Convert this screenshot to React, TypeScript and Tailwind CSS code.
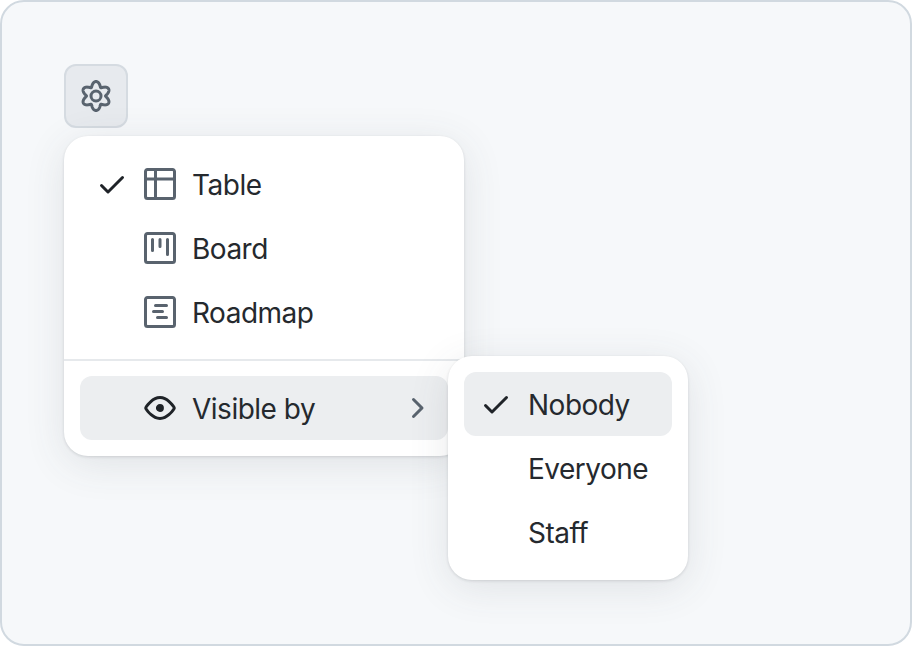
import type { ReactNode } from 'react';

// Octicons at their 16px grid, scaled up to 32
const FRAME =
  'M0 1.75C0 .784.784 0 1.75 0h12.5C15.216 0 16 .784 16 1.75v12.5A1.75 1.75 0 0 1 14.25 16H1.75A1.75 1.75 0 0 1 0 14.25ZM1.5 1.75v12.5c0 .138.112.25.25.25h12.5a.25.25 0 0 0 .25-.25V1.75a.25.25 0 0 0-.25-.25H1.75a.25.25 0 0 0-.25.25Z';

const ICONS = {
  check:
    'M13.78 4.22a.75.75 0 0 1 0 1.06l-7.25 7.25a.75.75 0 0 1-1.06 0L2.22 9.28a.751.751 0 0 1 .018-1.042.751.751 0 0 1 1.042-.018L6 10.94l6.72-6.72a.75.75 0 0 1 1.06 0Z',
  chevron:
    'M6.22 3.22a.75.75 0 0 1 1.06 0l4.25 4.25a.75.75 0 0 1 0 1.06l-4.25 4.25a.751.751 0 0 1-1.042-.018.751.751 0 0 1-.018-1.042L9.94 8 6.22 4.28a.75.75 0 0 1 0-1.06Z',
  table: FRAME + 'M5 1h1.5v14H5ZM1 4.75h14v1.5H1Z',
  board:
    FRAME +
    'M11.75 3a.75.75 0 0 1 .75.75v7.5a.75.75 0 0 1-1.5 0v-7.5a.75.75 0 0 1 .75-.75Zm-8.25.75a.75.75 0 0 1 1.5 0v5.5a.75.75 0 0 1-1.5 0ZM8 3a.75.75 0 0 1 .75.75v3.5a.75.75 0 0 1-1.5 0v-3.5A.75.75 0 0 1 8 3Z',
  roadmap:
    FRAME +
    'M4.75 7a.75.75 0 0 0 0 1.5h4.5a.75.75 0 0 0 0-1.5h-4.5ZM5 4.75A.75.75 0 0 1 5.75 4h5.5a.75.75 0 0 1 0 1.5h-5.5A.75.75 0 0 1 5 4.75ZM6.75 10a.75.75 0 0 0 0 1.5h4.5a.75.75 0 0 0 0-1.5h-4.5Z',
  eye:
    'M8 2c1.981 0 3.671.992 4.933 2.078 1.27 1.091 2.187 2.345 2.637 3.023a1.62 1.62 0 0 1 0 1.798c-.45.678-1.367 1.932-2.637 3.023C11.67 13.008 9.981 14 8 14c-1.981 0-3.671-.992-4.933-2.078C1.797 10.83.88 9.576.43 8.898a1.62 1.62 0 0 1 0-1.798c.45-.677 1.367-1.931 2.637-3.022C4.33 2.992 6.019 2 8 2ZM1.679 7.932a.12.12 0 0 0 0 .136c.411.622 1.241 1.75 2.366 2.717C5.176 11.758 6.527 12.5 8 12.5c1.473 0 2.825-.742 3.955-1.715 1.124-.967 1.954-2.096 2.366-2.717a.12.12 0 0 0 0-.136c-.412-.621-1.242-1.75-2.366-2.717C10.824 4.242 9.473 3.5 8 3.5c-1.473 0-2.825.742-3.955 1.715-1.124.967-1.954 2.096-2.366 2.717ZM8 10a2 2 0 1 1-.001-3.999A2 2 0 0 1 8 10Z',
};

function Icon({ name, className }: { name: keyof typeof ICONS; className?: string }) {
  return (
    <svg viewBox="0 0 16 16" width={32} height={32} fill="currentColor" className={className}>
      <path d={ICONS[name]} />
    </svg>
  );
}

// six rounded lobes with narrow notches between them
function gearOutline() {
  const points: string[] = [];
  for (let i = 0; i < 240; i++) {
    const angle = (i / 240) * Math.PI * 2;
    const radius = 9.5 + 5 * Math.pow(0.5 + 0.5 * Math.cos(6 * angle), 0.7);
    points.push(`${(16 + radius * Math.sin(angle)).toFixed(2)} ${(16 - radius * Math.cos(angle)).toFixed(2)}`);
  }
  return `M${points.join('L')}Z`;
}

function GearIcon() {
  return (
    <svg viewBox="0 0 32 32" width={32} height={32} fill="none" stroke="currentColor" strokeWidth={3} strokeLinejoin="round">
      <path d={gearOutline()} />
      <circle cx={16} cy={16} r={5} />
    </svg>
  );
}

interface RowProps {
  icon?: ReactNode;
  checked?: boolean;
  label: string;
}

function ViewRow({ icon, checked, label }: RowProps) {
  return (
    <div className="flex h-16 items-center rounded-xl pl-4">
      <span className="flex w-8 justify-center">
        {checked && <Icon name="check" className="text-[#1f2328]" />}
      </span>
      <span className="ml-4 text-[#59636e]">{icon}</span>
      <span className="ml-4 mt-0.5">{label}</span>
    </div>
  );
}

export default function App() {
  return (
    <div className="h-[646px] w-[912px] rounded-[24px] border-2 border-[#d1d9e0] bg-[#f6f8fa] p-[62px] text-[28px] leading-none tracking-[-0.5px] text-[#25292e] [font-family:Inter,sans-serif]">
      {/* Settings button */}
      <button className="flex h-16 w-16 items-center justify-center rounded-xl border-2 border-[#d5dbe1] bg-[#e7eaee] text-[#59636e]">
        <GearIcon />
      </button>

      {/* Main menu */}
      <div className="relative mt-2 w-[400px] rounded-3xl bg-white p-4 shadow-[0_1px_3px_rgba(31,35,40,0.14),0_8px_40px_rgba(66,74,83,0.12)]">
        <ViewRow checked icon={<Icon name="table" />} label="Table" />
        <ViewRow icon={<Icon name="board" />} label="Board" />
        <ViewRow icon={<Icon name="roadmap" />} label="Roadmap" />
        <div className="-mx-4 my-[15px] h-0.5 bg-[#e6e9ec]" />
        <div className="flex h-16 items-center rounded-xl bg-[#eceef0] px-4">
          <span className="w-8" />
          <Icon name="eye" className="ml-4 text-[#1f2328]" />
          <span className="ml-4 mt-0.5">Visible by</span>
          <Icon name="chevron" className="ml-auto text-[#59636e]" />
        </div>

        {/* Submenu */}
        <div className="absolute left-[384px] top-[220px] w-[240px] rounded-3xl bg-white p-4 shadow-[0_1px_3px_rgba(31,35,40,0.14),0_8px_40px_rgba(66,74,83,0.12)]">
          <div className="flex h-16 items-center rounded-xl bg-[#eceef0] pl-4">
            <Icon name="check" className="text-[#1f2328]" />
            <span className="ml-4 mt-0.5">Nobody</span>
          </div>
          <div className="flex h-16 items-center pl-[64px] pt-0.5">Everyone</div>
          <div className="flex h-16 items-center pl-[64px] pt-0.5">Staff</div>
        </div>
      </div>
    </div>
  );
}
